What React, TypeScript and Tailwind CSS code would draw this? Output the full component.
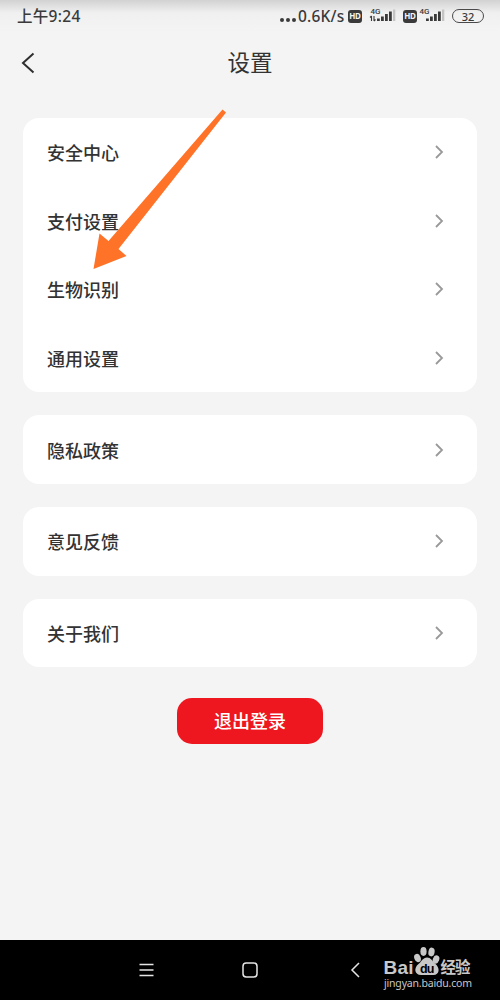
import type { ReactNode } from 'react';

const groups: string[][] = [
    ['安全中心', '支付设置', '生物识别', '通用设置'],
    ['隐私政策'],
    ['意见反馈'],
    ['关于我们'],
];

function HdBadge() {
    return (
        <span className="flex h-[13px] w-[14px] items-center justify-center rounded-[3px] bg-[#3a3a3a] text-[8px] font-bold leading-none tracking-tight text-[#f4f4f4]">
            HD
        </span>
    );
}

function Signal({ arrows = false }: { arrows?: boolean }) {
    return (
        <svg width="28" height="22" viewBox="0 -2 28 22" fill="#3a3a3a">
            <text x="1.500" y="6.500" fontSize="8" fontWeight="500" fontFamily="Roboto, sans-serif">
                4G
            </text>
            {arrows && (
                <g stroke="#3a3a3a" strokeWidth="1.1" fill="none">
                    <path d="M2.500 14v-5M1 10.500l1.500-1.500" />
                    <path d="M5 9v5M6.500 12.500L5 14" />
                </g>
            )}
            <rect x="8" y="11.500" width="2.800" height="2.500" />
            <rect x="12" y="9.500" width="2.800" height="4.500" />
            <rect x="16" y="7" width="2.800" height="7" />
            <rect x="20" y="4.500" width="2.800" height="9.500" />
            <rect x="24" y="2.500" width="2.300" height="11.500" fill="#c4c4c4" />
        </svg>
    );
}

function StatusBar() {
    return (
        <div className="flex h-8 items-center bg-gradient-to-b from-[#d2d2d2] via-[#f0f0f0] via-40% to-[#f4f4f4] pl-[17px] pr-4 text-[#3a3a3a]">
            <span className="text-[15.500px] font-medium leading-8 tracking-[0.3px]">上午9:24</span>
            <div className="ml-auto flex items-center">
                <div className="mt-[7px] flex gap-[2px]">
                    <span className="size-1 rounded-full bg-[#3a3a3a]" />
                    <span className="size-1 rounded-full bg-[#3a3a3a]" />
                    <span className="size-1 rounded-full bg-[#3a3a3a]" />
                </div>
                <span className="ml-[2px] w-[50px] text-[15.500px] font-medium leading-8 tracking-[0.2px]">0.6K/s</span>
                <HdBadge />
                <span className="ml-[7px]">
                    <Signal arrows />
                </span>
                <span className="ml-[6px]">
                    <HdBadge />
                </span>
                <span className="ml-[1px]">
                    <Signal />
                </span>
                <span className="ml-[6px] flex h-[14px] w-8 items-center justify-center rounded-full border-[1.5px] border-[#4a4a4a] text-[11px] font-medium leading-none">
                    32
                </span>
            </div>
        </div>
    );
}

function Header() {
    return (
        <header className="grid h-[62px] grid-cols-[1fr_auto_1fr] items-center px-[21px]">
            <svg width="14" height="22" viewBox="0 0 14 22" fill="none" stroke="#2f2f2f" strokeWidth="2">
                <path d="M12.500 1.500L2 11l10.500 9.500" />
            </svg>
            <h1 className="text-[22.500px] leading-none text-[#333]">设置</h1>
        </header>
    );
}

function SettingRow({ label }: { label: string }) {
    return (
        <li className="flex h-[68.700px] items-center justify-between pl-6 pr-[33.500px] pt-[2px]">
            <span className="text-lg font-medium leading-none text-[#333]">{label}</span>
            <svg className="mb-[2px]" width="9" height="14" viewBox="0 0 9 14" fill="none" stroke="#999" strokeWidth="1.800">
                <path d="M1 1l6 6l-6 6" />
            </svg>
        </li>
    );
}

function Card({ children }: { children: ReactNode }) {
    return <ul className="rounded-[16px] bg-white">{children}</ul>;
}

function Pointer() {
    return (
        <svg className="absolute left-0 top-0" width="250" height="280" viewBox="0 0 250 280">
            <path
                d="M222.500 109.500L226 112.500L118.500 249L126.500 256L93.500 269L99.500 233.500L108.500 241Z"
                fill="#ff7328"
            />
        </svg>
    );
}

function Watermark() {
    return (
        <svg className="absolute right-[20px] top-[5px]" width="100" height="50" viewBox="380 945 100 50" fill="#c8c8c8">
            <text x="383.500" y="973.500" fontSize="19" fontWeight="700" textLength="30" fontFamily="Liberation Sans, sans-serif">
                Bai
            </text>
            <ellipse cx="417.500" cy="958" rx="3.200" ry="4.300" transform="rotate(-20 417.500 958)" />
            <ellipse cx="423.500" cy="951.500" rx="3.100" ry="4.400" />
            <ellipse cx="431.500" cy="952" rx="3.100" ry="4.400" transform="rotate(10 431.500 952)" />
            <ellipse cx="436" cy="959.500" rx="3.200" ry="4.200" transform="rotate(20 436 959.500)" />
            <path d="M427 957.500c4 0 5 3.500 8 6c5.500 4.500 4.500 11.500-1.500 11.500h-12.500c-6.500 0-7.500-7-2.500-11c3-2.500 4.500-6.500 8.500-6.500z" />
            <text x="420" y="972.500" fontSize="12.500" fontWeight="700" fill="#000" textLength="14.500" fontFamily="Liberation Sans, sans-serif">
                du
            </text>
            <text x="440.500" y="973" fontSize="15.500" fontWeight="700" textLength="30" fontFamily="Noto Sans CJK SC, sans-serif">
                经验
            </text>
            <text x="384" y="986.500" fontSize="10.500" textLength="88" fontFamily="Noto Sans, sans-serif">
                jingyan.baidu.com
            </text>
        </svg>
    );
}

function NavBar() {
    return (
        <nav className="relative grid h-[60px] grid-cols-[146px_104px_105px] bg-black">
            <svg className="translate-x-1/2 self-center justify-self-end" width="16" height="16" viewBox="0 0 16 16" fill="none" stroke="#e5e5e5" strokeWidth="1.500">
                <path d="M1.500 2.500h14M1.500 8h14M1.500 13.500h14" />
            </svg>
            <svg className="translate-x-1/2 self-center justify-self-end" width="16" height="16" viewBox="0 0 16 16" fill="none" stroke="#e5e5e5" strokeWidth="1.500">
                <rect x="1" y="1" width="14" height="14" rx="3.200" />
            </svg>
            <svg className="translate-x-1/2 self-center justify-self-end" width="10" height="16" viewBox="0 0 10 16" fill="none" stroke="#e5e5e5" strokeWidth="1.500">
                <path d="M9 1L2 8l7 7" />
            </svg>
            <Watermark />
        </nav>
    );
}

export default function App() {
    return (
        <div className="relative flex h-[1000px] w-[500px] flex-col overflow-hidden bg-[#f4f4f4] font-['Noto_Sans','Noto_Sans_CJK_SC',sans-serif]">
            <StatusBar />
            <Header />
            <main className="flex flex-1 flex-col gap-[23px] px-[23px] pt-[23.500px]">
                {groups.map((labels) => (
                    <Card key={labels[0]}>
                        {labels.map((label) => (
                            <SettingRow key={label} label={label} />
                        ))}
                    </Card>
                ))}
                <button className="mt-2 h-[46px] w-[146px] self-center rounded-[15px] bg-[#ee171f] text-lg font-medium leading-none text-white">
                    退出登录
                </button>
            </main>
            <NavBar />
            <Pointer />
        </div>
    );
}
